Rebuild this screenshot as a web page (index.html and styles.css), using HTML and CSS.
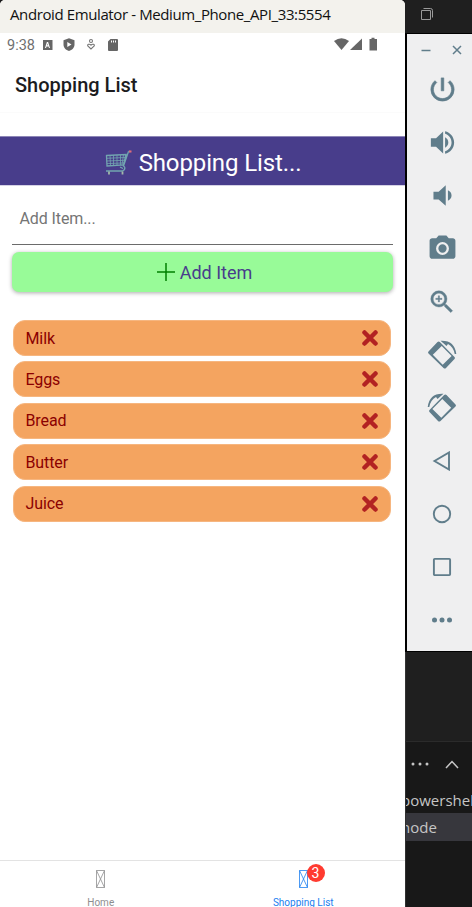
FILE: index.html
```html
<!DOCTYPE html>
<html lang="en">
<head>
<meta charset="utf-8">
<title>Shopping List</title>
<link rel="stylesheet" href="styles.css">
</head>
<body>
<div class="desktop">
  <main class="phone">
    <header class="window-title"><span>Android Emulator - Medium_Phone_API_33:5554</span></header>
    <div class="status">
      <span class="clock">9:38</span>
      <svg class="status-left" width="80" height="16" viewBox="0 0 80 16">
        <path fill="#666" fill-rule="evenodd" d="M1 3h9.500v10H1zM3 11h1l.5-1.500h2L7 11h1L6.100 5h-1.200zM5 8.300l.5-1.700.5 1.700z"/>
        <path fill="#666" fill-rule="evenodd" d="M27 1.200l5.500 2v4.500c0 3-2.500 5.300-5.500 6.300-3-1-5.500-3.300-5.500-6.300V3.200zM25.300 5v5l4.200-2.500z"/>
        <g fill="none" stroke="#777" stroke-width="1.100"><circle cx="49" cy="4" r="1.500"/><path d="M49 12l-3.200-3c-.8-1.500 1.600-2.700 3.200-.8 1.600-1.900 4-.7 3.200.8z"/></g>
        <path fill="#666" fill-rule="evenodd" d="M68.500 2H75q1 0 1 1v10q0 1-1 1h-8q-1 0-1-1V4.500zM69 3.500v2h1v-2zM71 3.500v2h1v-2zM73 3.500v2h1v-2z"/>
      </svg>
      <svg class="status-right" width="46" height="16" viewBox="0 0 46 16" fill="#666">
        <path d="M0 4q7.500-5.500 15 0L7.500 13z"/><path d="M28 1.500V13H16z"/><path d="M36 2h1.500V.8h3V2H43v11.500h-7.500V2z"/>
      </svg>
    </div>
    <div class="appbar"><h1>Shopping List</h1></div>
    <div class="banner">
      <svg width="27" height="28" viewBox="0 0 27 28" fill="none">
        <path stroke="#72a5b0" stroke-width="1.300" d="M1.500 6.500L21 5.500 18.500 16 2 17zM23.500 2.500L18.500 17q2 1 1 3.500L17.500 22H1M15 18l3 1.500M23.500 2.500h2"/>
        <path stroke="#72a5b0" stroke-width=".8" d="M5 6.500l.5 10M8.500 6.300v10.200M12 6.100v10.200M15.500 6v10M18.500 5.800L17 16M1.500 9.300l18.500-.8M1.700 12l17.800-.7M2 14.600l17-.7"/>
        <path stroke="#e26a78" stroke-width="1.800" d="M24 2.500h2.500"/>
        <path stroke="#a4b8aa" stroke-width="1.800" d="M4 22.500v3M17.500 22.500v3"/>
      </svg>
      <h2>Shopping List...</h2>
    </div>
    <div class="field"><span>Add Item...</span></div>
    <div class="button">
      <svg width="18" height="18" viewBox="0 0 18 18"><path fill="none" stroke="#008000" stroke-width="1.500" d="M0 9h18M9 0v18"/></svg>
      <span>Add Item</span>
    </div>
    <ul class="items">
      <li><span>Milk</span><svg width="16" height="16" viewBox="0 0 16 16"><path d="M2.500 2.500l11 11M13.500 2.500l-11 11"/></svg></li>
      <li><span>Eggs</span><svg width="16" height="16" viewBox="0 0 16 16"><path d="M2.500 2.500l11 11M13.500 2.500l-11 11"/></svg></li>
      <li><span>Bread</span><svg width="16" height="16" viewBox="0 0 16 16"><path d="M2.500 2.500l11 11M13.500 2.500l-11 11"/></svg></li>
      <li><span>Butter</span><svg width="16" height="16" viewBox="0 0 16 16"><path d="M2.500 2.500l11 11M13.500 2.500l-11 11"/></svg></li>
      <li><span>Juice</span><svg width="16" height="16" viewBox="0 0 16 16"><path d="M2.500 2.500l11 11M13.500 2.500l-11 11"/></svg></li>
    </ul>
    <nav class="tabs">
      <div class="tab">
        <svg width="9" height="18" viewBox="0 0 9 18"><path d="M.5.5h8v17h-8zM.5.5l8 17M8.500.5l-8 17"/></svg>
        <span>Home</span>
      </div>
      <div class="tab active">
        <svg width="9" height="18" viewBox="0 0 9 18"><path d="M.5.5h8v17h-8zM.5.5l8 17M8.500.5l-8 17"/></svg>
        <b class="badge">3</b>
        <span>Shopping List</span>
      </div>
    </nav>
  </main>
  <aside class="side">
    <div class="editor-top">
      <svg width="14" height="14" viewBox="0 0 14 14" fill="none" stroke="#9b9b9b"><path d="M1.500 3.500h9v9h-9zM3.500 1.500h7q2 0 2 2v7"/></svg>
    </div>
    <div class="toolbar">
      <div class="window-buttons">
        <svg width="10" height="10" viewBox="0 0 10 10"><path d="M.5 5.500h9"/></svg>
        <svg width="10" height="10" viewBox="0 0 10 10"><path d="M1 1l8 8M9 1L1 9"/></svg>
      </div>
      <div class="tool"><svg width="31" height="31" viewBox="0 0 24 24"><path stroke="#607d8b" stroke-width=".5" d="M13 3h-2v10h2V3zm4.830 2.170l-1.420 1.420C17.990 7.860 19 9.810 19 12c0 3.870-3.130 7-7 7s-7-3.130-7-7c0-2.190 1.010-4.140 2.580-5.420L6.170 5.170C4.230 6.820 3 9.260 3 12a9 9 0 0 0 18 0c0-2.740-1.230-5.180-3.170-6.830z"/></svg></div>
      <div class="tool"><svg width="31" height="31" viewBox="0 0 24 24"><path d="M3 8.700v6.600h4l5.500 5.200V3.500L7 8.700H3zm13.500 3.300c0-1.770-1.020-3.290-2.500-4.030v8.050c1.480-.73 2.500-2.250 2.500-4.020zM14 3.230v2.060c2.890.86 5 3.540 5 6.710s-2.110 5.850-5 6.710v2.060c4.010-.91 7-4.490 7-8.770s-2.990-7.860-7-8.770z"/></svg></div>
      <div class="tool"><svg width="31" height="31" viewBox="0 0 24 24"><path d="M19 12c0-1.770-1.020-3.290-2.800-4.030v8.050c1.780-.73 2.800-2.250 2.800-4.020zM5 9v6h4l5.500 5V4L9 9H5z"/></svg></div>
      <div class="tool"><svg width="31" height="31" viewBox="0 0 24 24"><path fill-rule="evenodd" d="M9 2L7.170 4H4c-1.100 0-2 .9-2 2v12c0 1.100.9 2 2 2h16c1.100 0 2-.9 2-2V6c0-1.100-.9-2-2-2h-3.170L15 2H9zm3 15a5 5 0 1 1 0-10 5 5 0 0 1 0 10zM12 8.800a3.200 3.200 0 1 0 0 6.400 3.200 3.200 0 0 0 0-6.400z"/></svg></div>
      <div class="tool"><svg width="30" height="30" viewBox="0 0 24 24"><path stroke="#607d8b" stroke-width=".3" d="M15.500 14h-.79l-.28-.27A6.471 6.471 0 0 0 16 9.500 6.500 6.500 0 1 0 9.500 16c1.610 0 3.090-.59 4.230-1.570l.27.28v.79l5 4.990L20.490 19l-4.990-5zm-6 0C7.010 14 5 11.990 5 9.500S7.010 5 9.500 5 14 7.010 14 9.500 11.990 14 9.500 14zm2.500-4h-2v2H9v-2H7V9h2V7h1v2h2v1z"/></svg></div>
      <div class="tool"><svg class="rotate" width="30" height="30" viewBox="0 0 30 30"><path fill-rule="evenodd" d="M10.500 2q1.200-.9 2.400 0L27.500 17q1 1 0 2L19 28q-1.200 1-2.500 0L1.500 13.500q-1-1 0-2zM14.700 6L5.800 14.700 15.700 24.700 24.600 16z"/><path d="M13.500.8Q27.500 0 29.300 14h-1.600Q26.500 7 21 4l-1.500 2z"/></svg></div>
      <div class="tool"><svg class="rotate flip" width="30" height="30" viewBox="0 0 30 30"><path fill-rule="evenodd" d="M10.500 2q1.200-.9 2.400 0L27.500 17q1 1 0 2L19 28q-1.200 1-2.500 0L1.500 13.500q-1-1 0-2zM14.700 6L5.800 14.700 15.700 24.700 24.600 16z"/><path d="M13.500.8Q27.500 0 29.300 14h-1.600Q26.500 7 21 4l-1.500 2z"/></svg></div>
      <div class="tool line"><svg width="20" height="20" viewBox="0 0 20 20"><path d="M17 1.500v17L2.500 10z"/></svg></div>
      <div class="tool line"><svg width="20" height="20" viewBox="0 0 20 20"><circle cx="10" cy="10" r="8.200"/></svg></div>
      <div class="tool line"><svg width="20" height="20" viewBox="0 0 20 20"><rect x="1.900" y="1.900" width="16.200" height="16.200" rx=".8"/></svg></div>
      <div class="tool"><svg width="22" height="6" viewBox="0 0 22 6"><circle cx="3.500" cy="3" r="2.500"/><circle cx="11" cy="3" r="2.500"/><circle cx="18.500" cy="3" r="2.500"/></svg></div>
    </div>
    <div class="panel-gap"></div>
    <div class="terminal">
      <div class="terminal-actions">
        <svg width="18" height="4" viewBox="0 0 18 4" fill="#c5c5c5"><circle cx="2" cy="2" r="1.500"/><circle cx="9" cy="2" r="1.500"/><circle cx="16" cy="2" r="1.500"/></svg>
        <svg width="14" height="9" viewBox="0 0 14 9"><path fill="none" stroke="#c5c5c5" stroke-width="1.500" d="M1 8l6-6.500L13 8"/></svg>
      </div>
      <div class="shell"><span>powershell</span></div>
      <div class="shell selected"><span>node</span></div>
    </div>
  </aside>
</div>
</body>
</html>
```
FILE: styles.css
```css
* { box-sizing: border-box; }
body { margin: 0; font-family: Roboto, sans-serif; background: #181818; }
h1, h2, ul { margin: 0; padding: 0; font-weight: 400; list-style: none; }
svg { display: block; flex: none; }
span { white-space: nowrap; }
.desktop { display: flex; width: 472px; height: 907px; overflow: hidden; }
.phone { width: 405px; height: 907px; flex: none; display: flex; flex-direction: column; background: #fff; border-radius: 5px 5px 0 0; overflow: hidden; }

.window-title { height: 33px; flex: none; background: #f3f2ed; padding: 3px 0 0 10px; font: 15px/22px "Open Sans", sans-serif; color: #111; letter-spacing: -.39px; }
.status { height: 22px; flex: none; display: flex; align-items: center; padding: 0 25px 0 7px; }
.clock { font-size: 14.500px; color: #707070; width: 35px; padding-top: 3px; }
.status-left { margin-top: 2px; }
.status-right { margin: 1px 0 0 auto; }
.appbar { height: 58px; flex: none; padding: 2px 15px 0; display: flex; align-items: center; border-bottom: 1px solid #fbfbfb; }
.appbar h1 { font-size: 20px; font-weight: 500; color: #1c1c1e; }
.banner { margin-top: 23px; height: 50px; flex: none; background: #483d8b; border-top: 1px solid #8d86b7; border-bottom: 1px solid #d5d2e5; display: flex; justify-content: center; align-items: center; gap: 7px; color: #fff; padding: 3px 0 0 1px; }
.banner h2 { font-size: 24px; line-height: 28px; letter-spacing: -.12px; }
.field { margin: 0 12px; height: 59px; flex: none; border-bottom: 2px solid #6b6b6b; border-bottom-width: 1.500px; display: flex; align-items: center; padding: 7px 7px 0 7.500px; color: #757575; font-size: 16px; letter-spacing: -.1px; }
.button { margin: 7px 12px 0; height: 40px; flex: none; background: #98fb98; border-radius: 7px; box-shadow: 0 1px 4px #0005; display: flex; justify-content: center; align-items: center; gap: 5px; padding-left: 4px; color: #483d8b; font-size: 18px; }
.items { margin: 28px 14px 0 13px; display: flex; flex-direction: column; gap: 5.400px; }
.items li { height: 36px; background: #f4a460; border: 1px solid #f6b680; border-radius: 12px; padding: 0 12px 0 11.500px; display: flex; align-items: center; justify-content: space-between; color: #8b0000; font-size: 16px; letter-spacing: -.1px; }
.items path { fill: none; stroke: #b22222; stroke-width: 4.500; stroke-linecap: round; }
.tabs { margin-top: auto; height: 47px; flex: none; border-top: 1px solid #e3e3e3; display: flex; }
.tab { flex: 1; position: relative; display: flex; flex-direction: column; align-items: center; padding: 9px 1px 0 0; gap: 9px; color: #8e8e8f; font-size: 10px; line-height: 12px; }
.tab path { fill: none; stroke: currentColor; stroke-width: .8; }
.tab.active { color: #2080f0; }
.badge { position: absolute; left: 104px; top: 3px; width: 18px; height: 18px; border-radius: 50%; background: #ff3b30; color: #fff; font-size: 14px; line-height: 18px; text-align: center; font-weight: 400; }

.side { width: 67px; flex: none; display: flex; flex-direction: column; }
.editor-top { height: 33px; flex: none; background: #1f1f1f; padding: 7px 0 0 15px; }
.toolbar { height: 619px; flex: none; background: #efeff0; border: solid #000; border-width: 1px 0 1px 2px; fill: #607d8b; }
.window-buttons { height: 29px; padding: 11px 10px 0 14px; display: flex; justify-content: space-between; }
.window-buttons path { fill: none; stroke: #607d8b; stroke-width: 1.500; }
.tool { height: 53px; padding-left: 5px; display: flex; align-items: center; justify-content: center; }
.line svg { fill: none; stroke: #607d8b; stroke-width: 1.900; }
.flip { transform: scaleX(-1); }
.panel-gap { height: 89px; flex: none; background: #1f1f1f; border-left: 1px solid #333; }
.terminal { flex: 1; background: #181818; border-top: 1px solid #2b2b2b; border-left: 1px solid #303030; }
.terminal-actions { height: 44px; display: flex; align-items: center; gap: 16px; padding-left: 5px; }
.shell { height: 27px; overflow: hidden; color: #c5c5c5; font: 15px/28px "Open Sans", sans-serif; display: flex; }
.shell span { margin-left: -5px; }
.shell.selected { background: #37373d; height: 28px; line-height: 29px; }
```
